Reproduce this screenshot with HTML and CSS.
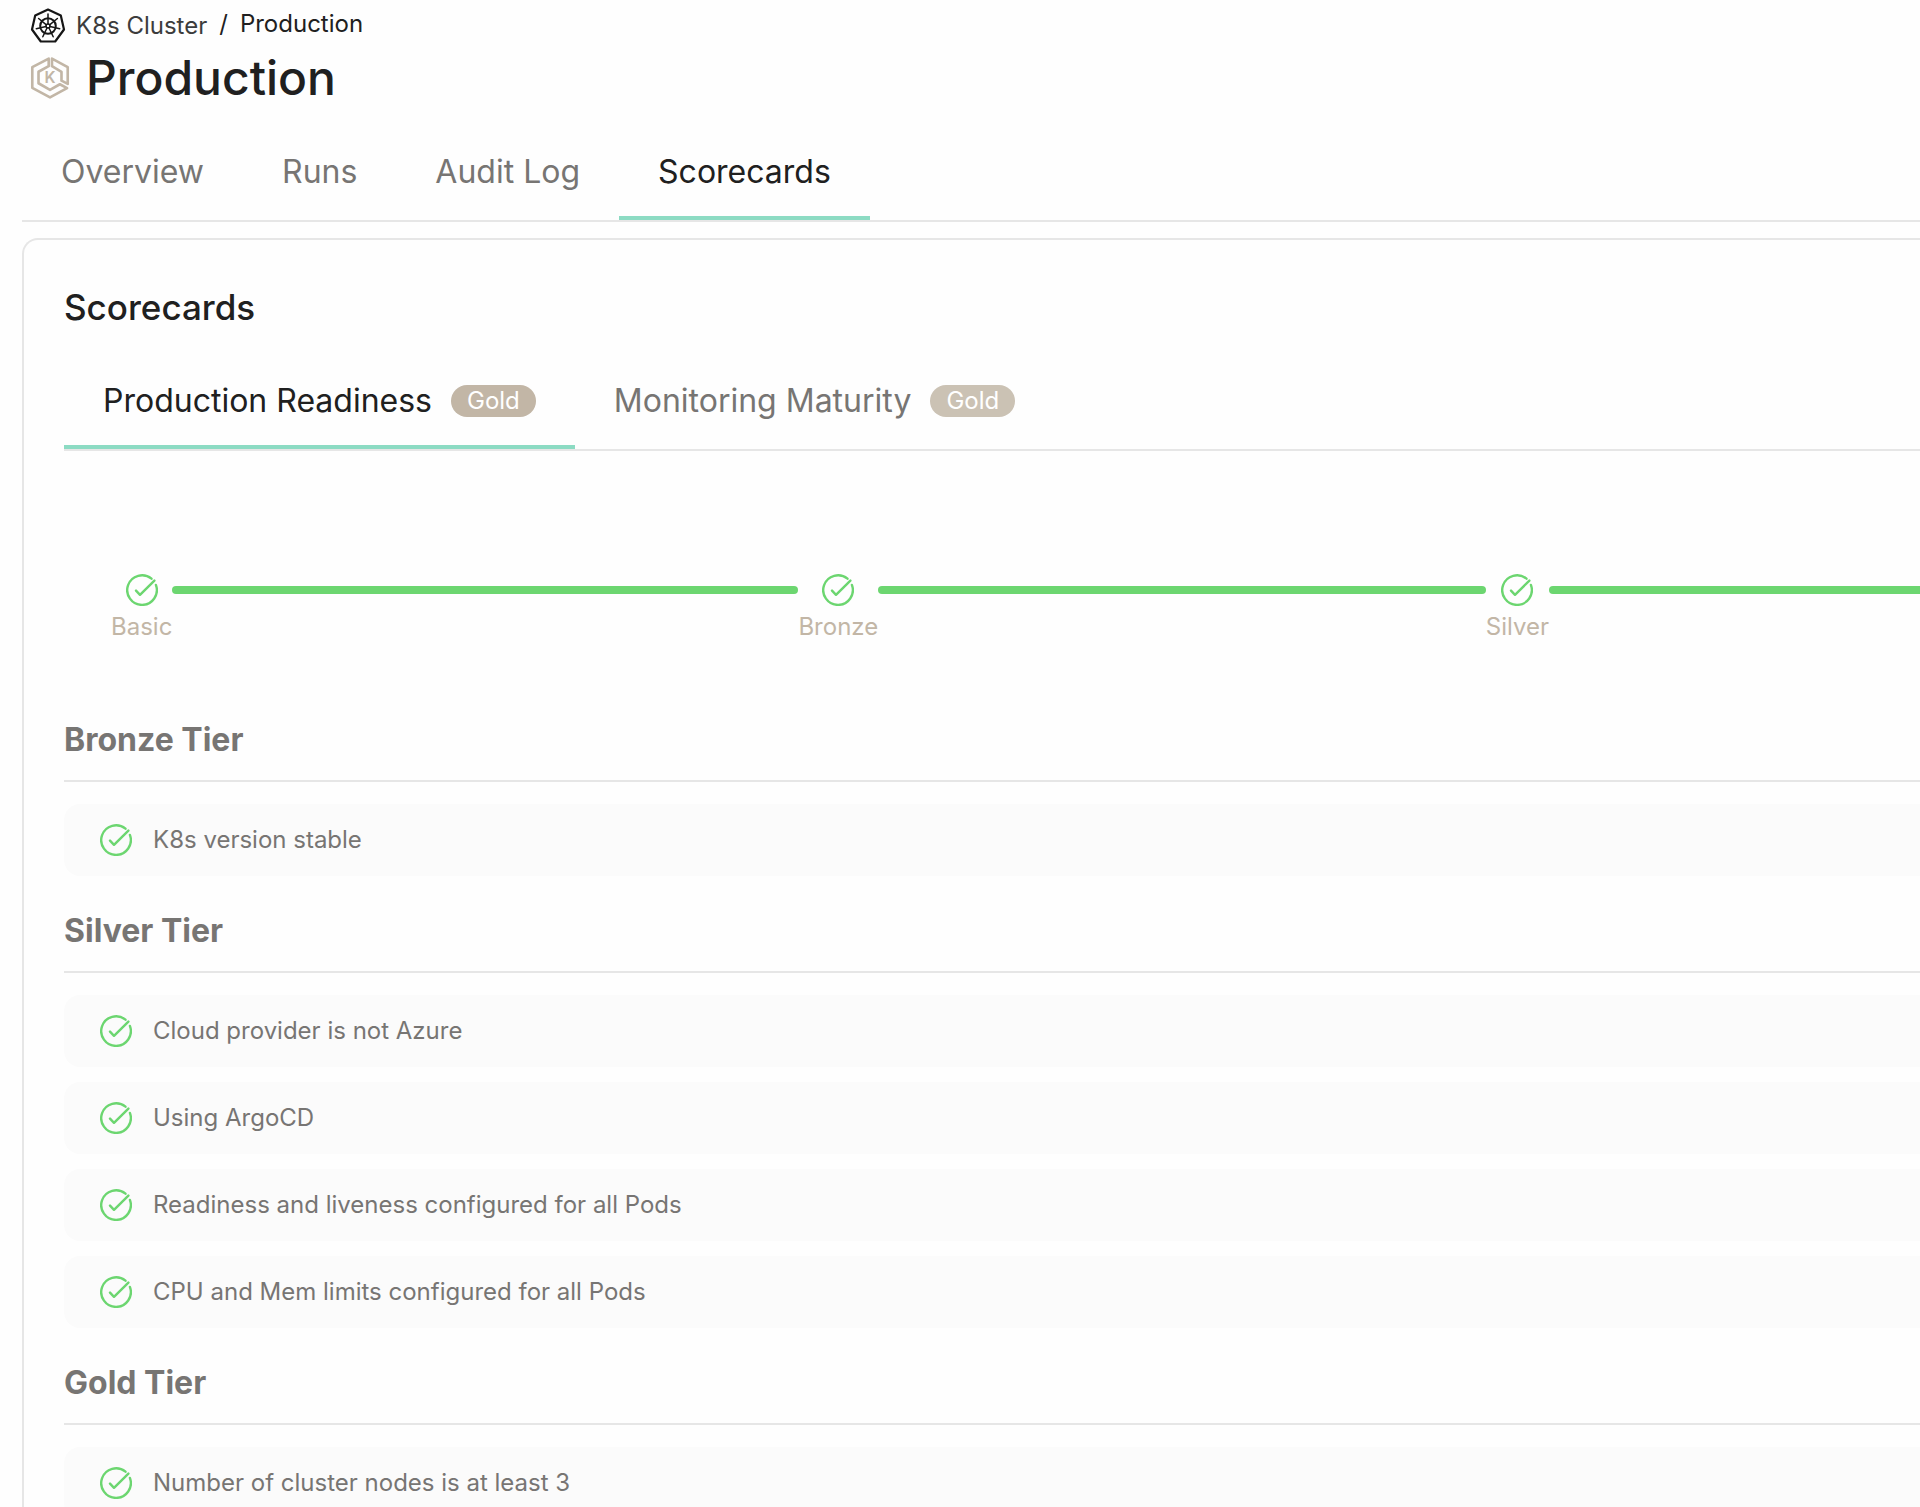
FILE: index.html
```html
<!DOCTYPE html>
<html lang="en">
<head>
<meta charset="utf-8">
<title>Production</title>
<link rel="stylesheet" href="styles.css">
</head>
<body>
<svg class="sprite" aria-hidden="true">
  <symbol id="check" viewBox="0 0 32 32">
    <path d="M25.5 4.7A14.8 14.8 0 1 0 29.9 10.9M10 16.6L14 20.8L28.4 6.6" fill="none" stroke="currentColor" stroke-width="2.4" stroke-linecap="round" stroke-linejoin="round"/>
  </symbol>
</svg>
<main class="page">
  <nav class="breadcrumb" aria-label="Breadcrumb">
    <a class="crumb" href="#clusters">
      <svg class="crumb-icon" viewBox="0 0 36 36" fill="none" stroke="currentColor" aria-hidden="true">
        <path d="M18 1.5L30.8 7.6L34 21.5L25.2 33.5H10.8L2 21.5L5.2 7.6Z" stroke-width="2.2" stroke-linejoin="round"/>
        <circle cx="18" cy="18" r="7.8" stroke-width="2"/>
        <circle cx="18" cy="18" r="2" stroke-width="1.5"/>
        <path d="M18 16V6M19.6 16.8L27.4 10.5M20 18.5L29.7 20.7M18.9 19.8L23.2 28.8M17.1 19.8L12.8 28.8M16 18.5L6.3 20.7M16.4 16.8L8.6 10.5" stroke-width="1.5" stroke-linecap="round"/>
      </svg>
      K8s Cluster
    </a>
    <span class="slash">/</span>
    <span class="current" aria-current="page">Production</span>
  </nav>

  <header class="title">
    <svg class="title-icon" viewBox="0 0 120 128" aria-hidden="true">
      <g fill="none" stroke="currentColor" stroke-width="8" stroke-linejoin="round">
        <path d="M56 5L6 31V94L60 123L112 95L90 83L60 100L25 80V45L56 28Z"/>
        <path d="M66 5L114 31V82L95 72V45L66 28Z"/>
      </g>
      <text x="43" y="80" class="title-icon-letter">K</text>
    </svg>
    <h1>Production</h1>
  </header>

  <nav class="tabs" aria-label="Entity">
    <a class="tab" href="#overview">Overview</a>
    <a class="tab" href="#runs">Runs</a>
    <a class="tab" href="#audit">Audit Log</a>
    <a class="tab active" href="#scorecards" aria-current="true">Scorecards</a>
  </nav>

  <section class="card">
    <h2>Scorecards</h2>
    <div class="tabs" role="tablist">
      <button class="tab active" type="button" role="tab" aria-selected="true">Production Readiness <span class="badge">Gold</span></button>
      <button class="tab" type="button" role="tab" aria-selected="false">Monitoring Maturity <span class="badge muted">Gold</span></button>
    </div>

    <ol class="stepper">
      <li class="step"><div class="step-node"><svg class="check"><use href="#check"/></svg><span>Basic</span></div><div class="bar"></div></li>
      <li class="step"><div class="step-node"><svg class="check"><use href="#check"/></svg><span>Bronze</span></div><div class="bar"></div></li>
      <li class="step"><div class="step-node"><svg class="check"><use href="#check"/></svg><span>Silver</span></div><div class="bar open"></div></li>
    </ol>

    <div class="tiers">
      <section>
        <h3>Bronze Tier</h3>
        <ul class="rules">
          <li><svg class="check"><use href="#check"/></svg>K8s version stable</li>
        </ul>
      </section>
      <section>
        <h3>Silver Tier</h3>
        <ul class="rules">
          <li><svg class="check"><use href="#check"/></svg>Cloud provider is not Azure</li>
          <li><svg class="check"><use href="#check"/></svg>Using ArgoCD</li>
          <li><svg class="check"><use href="#check"/></svg>Readiness and liveness configured for all Pods</li>
          <li><svg class="check"><use href="#check"/></svg>CPU and Mem limits configured for all Pods</li>
        </ul>
      </section>
      <section>
        <h3>Gold Tier</h3>
        <ul class="rules">
          <li><svg class="check"><use href="#check"/></svg>Number of cluster nodes is at least 3</li>
        </ul>
      </section>
    </div>
  </section>
</main>
</body>
</html>
```
FILE: styles.css
```css
:root {
  --ink: #202020;
  --muted: #777573;
  --sand: #c2b6a6;
  --line: #e6e6e6;
  --teal: #8cdbc3;
  --green: #6cd670;
}

* {
  box-sizing: border-box;
}

body {
  margin: 0;
  height: 100vh;
  overflow: hidden;
  background: #fefefe;
  color: var(--ink);
  font-family: Inter, "Liberation Sans", sans-serif;
  font-size: 24px;
  line-height: 32px;
}

h1, h2, h3, ol, ul {
  margin: 0;
  padding: 0;
  list-style: none;
}

a {
  color: inherit;
  text-decoration: none;
}

.sprite {
  display: none;
}

.page {
  padding: 8px 0 0 22px;
}

.breadcrumb {
  display: flex;
  gap: 12px;
  padding-left: 8px;
}

.crumb {
  display: flex;
  align-items: center;
  gap: 10px;
  color: #3c3c3c;
}

.crumb-icon {
  width: 36px;
  height: 36px;
  color: #161616;
}

.title {
  display: flex;
  align-items: center;
  gap: 16px;
  margin: 6px 0 22px;
  padding-left: 8px;
}

.title-icon {
  width: 40px;
  height: 42px;
  color: var(--sand);
}

.title-icon-letter {
  fill: currentColor;
  font-size: 48px;
  font-weight: 600;
}

h1 {
  font-size: 48px;
  font-weight: 500;
  line-height: 56px;
}

.tabs {
  display: flex;
  border-bottom: 2px solid var(--line);
}

.tab {
  display: flex;
  align-items: center;
  gap: 19px;
  padding: 24px 39px;
  border: 0;
  border-bottom: 4px solid transparent;
  background: none;
  color: var(--muted);
  font: inherit;
  font-size: 32px;
  line-height: 40px;
}

.tab.active {
  border-bottom-color: var(--teal);
  color: var(--ink);
}

.badge {
  padding: 0 16px;
  border-radius: 16px;
  background: var(--sand);
  color: #fff;
  font-size: 24px;
  line-height: 32px;
}

.badge.muted {
  background: #cbc2b4;
}

/* The card bleeds off the right side, so it is open there. */
.card {
  margin-top: 16px;
  padding: 45px 0 45px 40px;
  border: 2px solid var(--line);
  border-right: 0;
  border-radius: 16px 0 0 16px;
}

h2 {
  margin-bottom: 28px;
  font-size: 35px;
  font-weight: 500;
  line-height: 44px;
}

.stepper {
  display: grid;
  grid-template-columns: 38% 38% 1fr;
  padding: 123px 0 77px 47px;
}

.step {
  display: flex;
}

.step-node {
  display: flex;
  flex-direction: column;
  align-items: center;
  gap: 5px;
  color: var(--sand);
}

.check {
  flex: none;
  width: 32px;
  height: 32px;
  color: var(--green);
}

.bar {
  flex: 1;
  height: 8px;
  margin-top: 12px;
  border-radius: 4px;
  background: var(--green);
}

.bar.open {
  border-radius: 4px 0 0 4px;
}

.tiers {
  display: grid;
  gap: 35px;
}

h3 {
  margin-bottom: 22px;
  padding-bottom: 20px;
  border-bottom: 2px solid var(--line);
  color: var(--muted);
  font-size: 32px;
  font-weight: 700;
  line-height: 40px;
}

.rules {
  display: grid;
  gap: 15px;
}

.rules li {
  display: flex;
  align-items: center;
  gap: 21px;
  padding: 20px 36px;
  border-radius: 16px 0 0 16px;
  background: #fbfbfb;
  color: var(--muted);
}
```
